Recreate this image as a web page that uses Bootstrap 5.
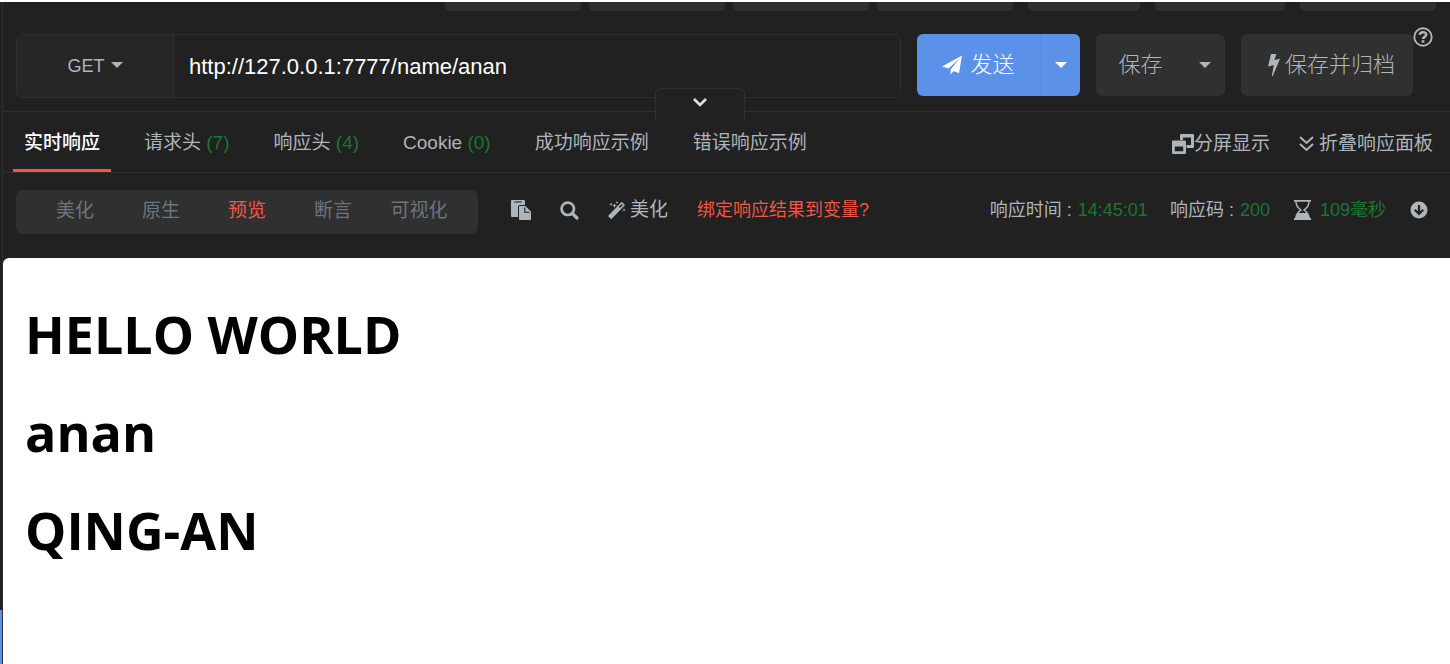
<!DOCTYPE html>
<html lang="zh-CN">
<head>
<meta charset="utf-8">
<meta name="viewport" content="width=device-width, initial-scale=1">
<title>接口调试</title>
<link rel="stylesheet" href="https://cdn.jsdelivr.net/npm/bootstrap@5.3.0/dist/css/bootstrap.min.css">
<style>
  :root { --bg:#212121; --panel:#303030; --line:#2f2f2f; --fg:#adb5bd; --red:#f05545; --green:#1c7430; --blue:#5b91e9; }
  body { background:var(--bg); color:var(--fg); font:18px/28px "Liberation Sans","Noto Sans CJK SC",sans-serif; border-top:2px solid #fff; }
  svg { display:block; flex:none; fill:currentColor; }
  button, a { color:inherit; }
  .btn { --bs-btn-color:var(--fg); --bs-btn-hover-color:#fff; --bs-btn-active-color:#fff; --bs-btn-border-width:0; --bs-btn-padding-x:0; --bs-btn-padding-y:0; --bs-btn-font-size:inherit; --bs-btn-line-height:28px; font-weight:inherit; }
  .rail { width:2px; }
  .rail-mark { height:54px; background:var(--blue); }
  .workspace { border-left:1px solid var(--line); }
  .doc-tabs { gap:8px; padding-right:14px; }
  .doc-tab { width:136px; height:9px; background:var(--panel); border-radius:0 0 5px 5px; }
  .tab-sm { width:112px; }
  .tab-md { width:130px; }
  .spaced { margin-right:7px; }
  .request-bar { padding:23px 17px 13px 13px; border-bottom:1px solid var(--line); }
  .url-box { height:64px; border:1px solid var(--line); border-radius:6px; overflow:hidden; }
  .method { width:157px; background:#262626; border-right:1px solid var(--line) !important; border-radius:0; }
  .method::after, .split::after { border-width:6px 6px 0; vertical-align:4px; margin-left:6px; }
  .split::after { margin-left:0; }
  .url-input, .url-input:focus { background:none; border:0; color:#fff; font-size:22px; padding:0 15px; box-shadow:none; }
  .act { height:62px; font-size:22px; font-weight:300; border-radius:6px; background:var(--panel); overflow:hidden; }
  .act-send { background:var(--blue); color:#fff; }
  .act .btn { font-size:22px; border-radius:0; }
  .send-main { width:123px; }
  .save-main { width:89px; }
  .archive { width:172px; }
  .split { width:40px; }
  .act-send .btn { color:#fff; }
  .act-send .split { border-left:1px solid #5689de; }
  .help { margin-top:-7px; }
  .fold { position:absolute; left:652px; bottom:-9px; width:90px; height:32px; background:var(--bg); border:1px solid var(--line); border-bottom:0; border-radius:6px 6px 0 0; color:#dee2e6; }
  .res-tabs { font-size:19px; padding:0 17px 0 10px; border-bottom:1px solid var(--line); }
  .res-tabs .nav { gap:22px; }
  .res-tabs .nav-link { color:var(--fg); padding:17px 11px 12px; border-bottom:3px solid transparent; line-height:28px; }
  .res-tabs .nav-link.active { color:#fff; border-color:var(--red); font-weight:500; }
  .pane-actions { gap:28px; padding-top:3px; }
  .ok { color:var(--green); }
  .bind-link { color:var(--red); }
  .tools { padding:17px 22px 24px 13px; }
  .modes { background:var(--panel); border-radius:7px; padding:7px 16px 9px; font-size:19px; }
  .modes .btn { width:86px; color:#6c757d; }
  .modes .btn.active { color:var(--red); }
  .tool-set { margin-left:33px; gap:29px; }
  .tool-lg { font-size:19px; }
  .stats > span { margin-left:22px; }
  .stats span .ok { margin-left:1px; }
  .stats .took { margin-left:9px; }
  .preview { background:#fff; color:#000; border-radius:6px 0 0 0; padding:40px 22px; font-family:"Open Sans","Noto Sans",sans-serif; }
  .preview h1 { font-size:52px; line-height:72px; font-weight:700; margin:0 0 26px; }
</style>
</head>
<body class="d-flex min-vh-100">
  <aside class="rail d-flex flex-column justify-content-end"><div class="rail-mark"></div></aside>
  <main class="workspace flex-grow-1 d-flex flex-column">
    <div class="doc-tabs d-flex justify-content-end">
      <div class="doc-tab"></div><div class="doc-tab"></div><div class="doc-tab"></div><div class="doc-tab spaced"></div>
      <div class="doc-tab tab-sm spaced"></div><div class="doc-tab tab-md spaced"></div><div class="doc-tab"></div>
    </div>

    <form class="request-bar d-flex align-items-start position-relative">
      <div class="url-box d-flex flex-grow-1">
        <button type="button" class="btn method dropdown-toggle flex-shrink-0">GET</button>
        <input class="form-control url-input" type="text" aria-label="URL" value="http://127.0.0.1:7777/name/anan">
      </div>
      <div class="act act-send d-flex ms-3">
        <button type="button" class="btn send-main d-flex align-items-center justify-content-center gap-2">
          <svg width="20" height="20" viewBox="0 0 20 20"><path d="M20 .5 17 18 11.8 15.9 8.6 19.5V14.8L17.4 3.6 6.6 13.6 0 11.6Z"/><path d="M18.2 2.8 9.2 14.6 11.8 15.9 17 18Z"/></svg>发送
        </button>
        <button type="button" class="btn split dropdown-toggle" aria-label="发送选项"></button>
      </div>
      <div class="act d-flex ms-3">
        <button type="button" class="btn save-main">保存</button>
        <button type="button" class="btn split dropdown-toggle" aria-label="保存选项"></button>
      </div>
      <button type="button" class="btn act archive d-flex align-items-center justify-content-center ms-3 ps-2">
        <svg class="me-1" width="14" height="22" viewBox="0 0 14 22"><path d="M4 0H9.4L7.4 6 13 4.8 5.8 22H4.8L6.8 11 1 12.4Z"/></svg>保存并归档
      </button>
      <button type="button" class="btn help" aria-label="帮助">
        <svg width="20" height="20" viewBox="0 0 20 20"><circle cx="10" cy="10" r="8.7" fill="none" stroke="currentColor" stroke-width="1.9"/><path d="M6.8 7.8C7 5.9 8.2 5.2 10 5.2S13.2 6.2 13.2 7.8C13.2 9.9 10 9.8 10 12.1" fill="none" stroke="currentColor" stroke-width="2.5"/><path d="M8.7 13.2H11.4V15.8H8.7Z"/></svg>
      </button>
      <button type="button" class="fold d-flex justify-content-center pt-2" aria-label="收起">
        <svg width="16" height="11" viewBox="0 0 16 11"><path d="M2 2 8 8 14 2" fill="none" stroke="currentColor" stroke-width="2.6"/></svg>
      </button>
    </form>

    <div class="res-tabs d-flex justify-content-between align-items-center">
      <nav class="nav flex-nowrap text-nowrap">
        <a class="nav-link active" href="#">实时响应</a>
        <a class="nav-link" href="#">请求头 <span class="ok">(7)</span></a>
        <a class="nav-link" href="#">响应头 <span class="ok">(4)</span></a>
        <a class="nav-link" href="#">Cookie <span class="ok">(0)</span></a>
        <a class="nav-link" href="#">成功响应示例</a>
        <a class="nav-link" href="#">错误响应示例</a>
      </nav>
      <div class="pane-actions d-flex text-nowrap">
        <button type="button" class="btn d-flex align-items-center">
          <svg width="22" height="20" viewBox="0 0 22 20"><path fill-rule="evenodd" d="M9 0H20.8Q22 0 22 1.2V12.8Q22 14 20.8 14H14.6V11H19V3.4H11V6H8V1.2Q8 0 9 0Z"/><path fill-rule="evenodd" d="M1.2 6.5H12.8Q14 6.5 14 7.7V18.8Q14 20 12.8 20H1.2Q0 20 0 18.8V7.7Q0 6.5 1.2 6.5ZM2.8 12.5V17.2H11.2V12.5Z"/></svg>分屏显示
        </button>
        <button type="button" class="btn d-flex align-items-center">
          <svg class="me-1" width="17" height="18" viewBox="0 0 17 18"><path d="M2 2 8.5 8 15 2M2 9 8.5 15 15 9" fill="none" stroke="currentColor" stroke-width="2"/></svg>折叠响应面板
        </button>
      </div>
    </div>

    <div class="tools d-flex align-items-center text-nowrap">
      <div class="modes d-flex">
        <button type="button" class="btn">美化</button>
        <button type="button" class="btn">原生</button>
        <button type="button" class="btn active">预览</button>
        <button type="button" class="btn">断言</button>
        <button type="button" class="btn">可视化</button>
      </div>
      <div class="tool-set d-flex align-items-center pb-1">
        <button type="button" class="btn" aria-label="复制">
          <svg width="20" height="20" viewBox="0 0 20 20"><path fill-rule="evenodd" d="M1 0H13Q14 0 14 1V5H9Q7 5 7 7V17H1Q0 17 0 16V1Q0 0 1 0ZM3.2 1.5V2.5H10.8V1.5Z"/><path fill-rule="evenodd" d="M9 6H14.5L20 11.5V19Q20 20 19 20H9Q8 20 8 19V7Q8 6 9 6ZM13.2 7.4V12.8H18.6V11.7H14.3V7.4Z"/></svg>
        </button>
        <button type="button" class="btn" aria-label="搜索">
          <svg width="19" height="19" viewBox="0 0 19 19"><circle cx="7.8" cy="7.8" r="6.2" fill="none" stroke="currentColor" stroke-width="2.7"/><path d="M12.3 12.3 17 17" stroke="currentColor" stroke-width="3.2" stroke-linecap="round"/></svg>
        </button>
        <button type="button" class="btn tool-lg d-flex align-items-center">
          <svg class="me-1" width="18" height="19" viewBox="0 0 18 19"><path fill-rule="evenodd" d="M13.7 .8 17 4.1 3.3 18.2 0 14.9ZM13.7 2.9 10.8 5.9 12 7.1 14.9 4.1Z"/><path d="M3 1.3 3.5 2.8 5 3.3 3.5 3.8 3 5.3 2.5 3.8 1 3.3 2.5 2.8ZM9 0 9.4 1.1 10.5 1.5 9.4 1.9 9 3 8.6 1.9 7.5 1.5 8.6 1.1ZM6.5 2.3 7.1 4 8.8 4.6 7.1 5.2 6.5 6.9 5.9 5.2 4.2 4.6 5.9 4ZM16 7.3 16.4 8.6 17.7 9 16.4 9.4 16 10.7 15.6 9.4 14.3 9 15.6 8.6Z"/></svg>美化
        </button>
        <a class="bind-link text-decoration-none" href="#">绑定响应结果到变量?</a>
      </div>
      <div class="stats d-flex align-items-center ms-auto pb-1">
        <span>响应时间 : <span class="ok">14:45:01</span></span>
        <span>响应码 : <span class="ok">200</span></span>
        <svg class="ms-4" width="17" height="20" viewBox="0 0 17 20"><path d="M0 .9H17M0 19H17" stroke="currentColor" stroke-width="1.8"/><path d="M2 1.5C2 6 4 8 7 10 4 12 2 14 2 18M15 1.5C15 6 13 8 10 10 13 12 15 14 15 18" fill="none" stroke="currentColor" stroke-width="1.5"/><path d="M1.5 18.5C2 16 3 14.4 4.5 13H12.5C14 14.4 15 16 15.5 18.5Z"/></svg>
        <span class="took ok">109毫秒</span>
        <button type="button" class="btn ms-4" aria-label="下载">
          <svg width="18" height="18" viewBox="0 0 18 18"><circle cx="9" cy="9" r="8.5"/><path d="M9 4V13M4.8 8.8 9 13 13.2 8.8" fill="none" stroke="#212121" stroke-width="2.2"/></svg>
        </button>
      </div>
    </div>

    <section class="preview flex-grow-1">
      <h1>HELLO WORLD</h1>
      <h1>anan</h1>
      <h1>QING-AN</h1>
    </section>
  </main>
<script src="https://cdn.jsdelivr.net/npm/bootstrap@5.3.0/dist/js/bootstrap.bundle.min.js"></script>
</body>
</html>
